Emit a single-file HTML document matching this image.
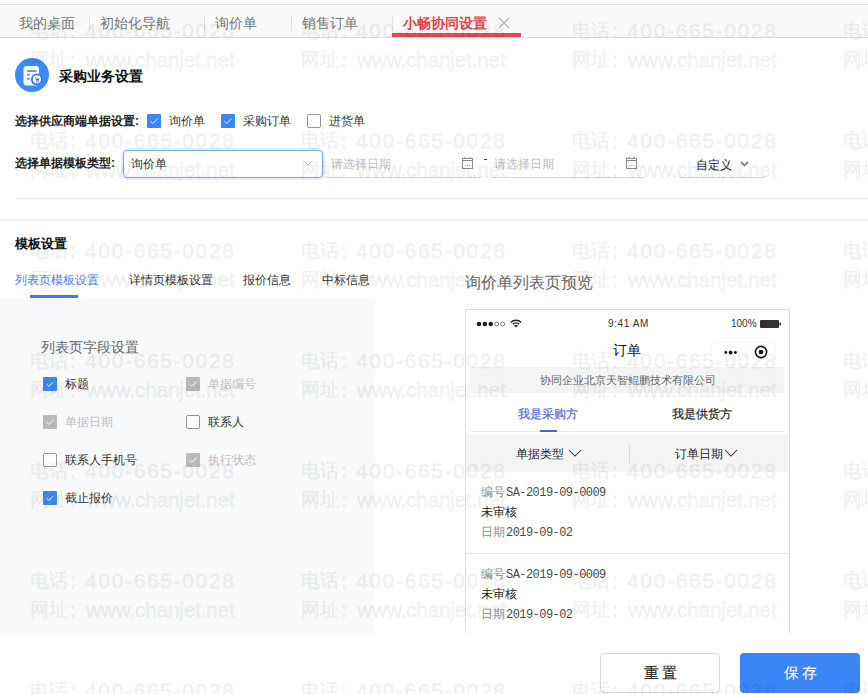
<!DOCTYPE html>
<html><head><meta charset="utf-8">
<style>
*{margin:0;padding:0;box-sizing:border-box;}
html,body{width:868px;height:694px;overflow:hidden;background:#fff;font-family:"Liberation Sans",sans-serif;color:#333;}
.a{position:absolute;white-space:nowrap;}
#topline{left:0;top:4px;width:868px;height:1px;background:#dcdcdc;}
#tabbar{left:0;top:5px;width:868px;height:33px;background:#f9f9f9;border-bottom:1px solid #dedede;}
.tab{font-size:14px;line-height:14px;color:#777;top:16px;}
.sep{top:16px;width:1px;height:15px;background:#e2e2e2;}
#act{color:#e0474d;font-weight:bold;}
#redline{left:392px;top:33px;width:129px;height:4px;background:#e24a50;}
.lbl{font-size:12px;line-height:12px;font-weight:bold;color:#222;}
.cb{width:14px;height:14px;border-radius:1px;}
.cb.on{background:#3c87f6;}
.cb.off{border:1px solid #949494;background:#fff;border-radius:2px;}
.cb.dis{background:#b9b9b9;}
.cb svg{position:absolute;left:0;top:0;}
.t12{font-size:12px;line-height:12px;color:#333;}
.wm{position:absolute;width:240px;height:60px;pointer-events:none;color:rgba(0,0,0,0.042);font-size:21px;line-height:21px;-webkit-text-stroke:1.4px rgba(0,0,0,0.042);}
.wm i{position:absolute;font-style:normal;white-space:nowrap;}
.c1{left:0;top:1px;font-size:19px;line-height:19px}.k1{left:40px;top:0}.d1{left:55px;top:0;letter-spacing:1.65px}.c2{left:0;top:30px;font-size:19px;line-height:19px}.k2{left:40px;top:29px}.d2{left:56px;top:29px;letter-spacing:-0.3px}
</style></head><body>

<div class="a" id="topline"></div>
<div class="a" id="tabbar"></div>
<div class="a tab" style="left:19px">我的桌面</div>
<div class="a sep" style="left:89px"></div>
<div class="a tab" style="left:100px">初始化导航</div>
<div class="a sep" style="left:204px"></div>
<div class="a tab" style="left:215px">询价单</div>
<div class="a sep" style="left:291px"></div>
<div class="a tab" style="left:302px">销售订单</div>
<div class="a sep" style="left:392px"></div>
<div class="a tab" id="act" style="left:403px">小畅协同设置</div>
<svg class="a" style="left:498px;top:17px" width="12" height="12" viewBox="0 0 12 12"><path d="M1 1L11 11M11 1L1 11" stroke="#b0b0b0" stroke-width="1.1"/></svg>
<div class="a" id="redline"></div>

<!-- header -->
<svg class="a" style="left:15px;top:58px" width="34" height="34" viewBox="0 0 34 34">
<circle cx="17" cy="17" r="17" fill="#3b8af6"/>
<rect x="8.5" y="8" width="15.5" height="19.5" rx="3" fill="#fff"/>
<rect x="12" y="12.3" width="9.5" height="1.6" fill="#3b8af6"/>
<rect x="12" y="16" width="2.6" height="1.6" fill="#3b8af6"/>
<rect x="12" y="20" width="2.6" height="1.6" fill="#3b8af6"/>
<circle cx="21.9" cy="21.4" r="6" fill="#3b8af6"/>
<circle cx="21.9" cy="21.4" r="5.3" fill="#2f6fd6"/>
<circle cx="21.9" cy="21.4" r="4.1" fill="#fff"/>
<path d="M19.8 19.5h0.9l0.4 1h3.3l-0.6 2.3h-2.4z" fill="#3578e0"/><circle cx="21.5" cy="23.9" r="0.65" fill="#3578e0"/><circle cx="23.3" cy="23.9" r="0.65" fill="#3578e0"/>
</svg>
<div class="a" style="left:59px;top:69px;font-size:14px;line-height:14px;font-weight:bold;color:#111">采购业务设置</div>

<!-- row 1 -->
<div class="a lbl" style="left:15px;top:115px">选择供应商端单据设置:</div>
<div class="a cb on" style="left:147px;top:114px"><svg width="14" height="14" viewBox="0 0 14 14"><path d="M3.5 7.2l2.3 2.2 4.7-4.7" stroke="#fff" stroke-width="0.95" fill="none"/></svg></div>
<div class="a t12" style="left:169px;top:115px">询价单</div>
<div class="a cb on" style="left:221px;top:114px"><svg width="14" height="14" viewBox="0 0 14 14"><path d="M3.5 7.2l2.3 2.2 4.7-4.7" stroke="#fff" stroke-width="0.95" fill="none"/></svg></div>
<div class="a t12" style="left:243px;top:115px">采购订单</div>
<div class="a cb off" style="left:307px;top:114px"></div>
<div class="a t12" style="left:329px;top:115px">进货单</div>

<!-- row 2 -->
<div class="a lbl" style="left:15px;top:157px">选择单据模板类型:</div>
<div class="a" style="left:123px;top:150px;width:200px;height:28px;border:1px solid #7fa6e6;border-radius:4px;box-shadow:0 0 0 2px rgba(120,170,240,.2)"></div>
<div class="a t12" style="left:131px;top:158px">询价单</div>
<svg class="a" style="left:304px;top:161px" width="8" height="5" viewBox="0 0 8 5"><path d="M0.5 0.5L4 4 7.5 0.5" stroke="#c4c4c4" stroke-width="1" fill="none"/></svg>

<div class="a" style="left:324px;top:150px;width:158px;height:28px;border-bottom:1px solid #d6d6d6;border-radius:0 0 4px 4px"></div>
<div class="a t12" style="left:331px;top:158px;color:#bbb">请选择日期</div>
<svg class="a" style="left:462px;top:156px" width="11" height="13" viewBox="0 0 11 13"><rect x="0.5" y="2.5" width="10" height="10" fill="none" stroke="#8c8c8c" stroke-width="1"/><path d="M0.5 4.5h10" stroke="#8c8c8c"/><path d="M3 1v2M8 1v2" stroke="#8c8c8c"/><path d="M3 9.5h1M5 9.5h1M7 9.5h1" stroke="#aaa"/></svg>
<div class="a" style="left:484px;top:159px;width:3px;height:1px;background:#333"></div>
<div class="a" style="left:489px;top:150px;width:157px;height:28px;border-bottom:1px solid #d6d6d6;border-radius:0 0 4px 4px"></div>
<div class="a t12" style="left:494px;top:158px;color:#bbb">请选择日期</div>
<svg class="a" style="left:626px;top:156px" width="11" height="13" viewBox="0 0 11 13"><rect x="0.5" y="2.5" width="10" height="10" fill="none" stroke="#8c8c8c" stroke-width="1"/><path d="M0.5 4.5h10" stroke="#8c8c8c"/><path d="M3 1v2M8 1v2" stroke="#8c8c8c"/><path d="M3 9.5h1M5 9.5h1M7 9.5h1" stroke="#aaa"/></svg>
<div class="a" style="left:678px;top:150px;width:88px;height:28px;border-bottom:1px solid #d6d6d6;border-radius:0 0 4px 4px"></div>
<div class="a t12" style="left:696px;top:159px;color:#222">自定义</div>
<svg class="a" style="left:740px;top:161px" width="9" height="6" viewBox="0 0 9 6"><path d="M1 1L4.5 4.5 8 1" stroke="#888" stroke-width="1.8" fill="none"/></svg>

<div class="a" style="left:16px;top:198px;width:852px;height:1px;background:#ebebeb"></div>
<div class="a" style="left:0;top:219px;width:868px;height:2px;background:#f3f3f3"></div>

<!-- template settings -->
<div class="a" style="left:15px;top:237px;font-size:13px;line-height:13px;font-weight:bold;color:#111">模板设置</div>
<div class="a t12" style="left:15px;top:274px;color:#4f86e6">列表页模板设置</div>
<div class="a t12" style="left:129px;top:274px">详情页模板设置</div>
<div class="a t12" style="left:243px;top:274px">报价信息</div>
<div class="a t12" style="left:322px;top:274px">中标信息</div>
<div class="a" style="left:30px;top:295px;width:48px;height:3px;background:#3b7ce2"></div>

<div class="a" style="left:0;top:299px;width:375px;height:334px;background:#f7f9fb"></div>
<div class="a" style="left:41px;top:340px;font-size:14px;line-height:14px;color:#666">列表页字段设置</div>

<div class="a cb on" style="left:43px;top:377px"><svg width="14" height="14" viewBox="0 0 14 14"><path d="M3.5 7.2l2.3 2.2 4.7-4.7" stroke="#fff" stroke-width="0.95" fill="none"/></svg></div>
<div class="a t12" style="left:65px;top:378px">标题</div>
<div class="a cb dis" style="left:186px;top:377px"><svg width="14" height="14" viewBox="0 0 14 14"><path d="M3.5 7.2l2.3 2.2 4.7-4.7" stroke="#fff" stroke-width="0.95" fill="none"/></svg></div>
<div class="a t12" style="left:208px;top:378px;color:#c0c0c0">单据编号</div>
<div class="a cb dis" style="left:43px;top:415px"><svg width="14" height="14" viewBox="0 0 14 14"><path d="M3.5 7.2l2.3 2.2 4.7-4.7" stroke="#fff" stroke-width="0.95" fill="none"/></svg></div>
<div class="a t12" style="left:65px;top:416px;color:#c0c0c0">单据日期</div>
<div class="a cb off" style="left:186px;top:415px"></div>
<div class="a t12" style="left:208px;top:416px">联系人</div>
<div class="a cb off" style="left:43px;top:453px"></div>
<div class="a t12" style="left:65px;top:454px">联系人手机号</div>
<div class="a cb dis" style="left:186px;top:453px"><svg width="14" height="14" viewBox="0 0 14 14"><path d="M3.5 7.2l2.3 2.2 4.7-4.7" stroke="#fff" stroke-width="0.95" fill="none"/></svg></div>
<div class="a t12" style="left:208px;top:454px;color:#c0c0c0">执行状态</div>
<div class="a cb on" style="left:43px;top:491px"><svg width="14" height="14" viewBox="0 0 14 14"><path d="M3.5 7.2l2.3 2.2 4.7-4.7" stroke="#fff" stroke-width="0.95" fill="none"/></svg></div>
<div class="a t12" style="left:65px;top:492px">截止报价</div>

<!-- preview -->
<div class="a" style="left:465px;top:275px;font-size:16px;line-height:16px;color:#666">询价单列表页预览</div>
<div class="a" style="left:465px;top:309px;width:325px;height:340px;border:1px solid #dcdcdc;background:#fff;overflow:hidden">
  <!-- status bar -->
  <svg class="a" style="left:10px;top:10px" width="30" height="8" viewBox="0 0 30 8">
   <circle cx="3" cy="4" r="2.3" fill="#222"/><circle cx="8.9" cy="4" r="2.3" fill="#222"/><circle cx="14.8" cy="4" r="2.3" fill="#222"/>
   <circle cx="20.7" cy="4" r="2" fill="none" stroke="#444" stroke-width="0.7"/><circle cx="26.6" cy="4" r="2" fill="none" stroke="#444" stroke-width="0.7"/>
  </svg>
  <svg class="a" style="left:44px;top:9px" width="12" height="9" viewBox="0 0 12 9">
   <path d="M0.8 3.4a7.3 7.3 0 0 1 10.4 0" stroke="#222" stroke-width="1.4" fill="none"/>
   <path d="M2.7 5.3a4.6 4.6 0 0 1 6.6 0" stroke="#222" stroke-width="1.4" fill="none"/>
   <path d="M4.2 6.8a2.5 2.5 0 0 1 3.6 0L6 8.6z" fill="#222"/>
  </svg>
  <div class="a" style="left:142px;top:9px;font-size:10px;line-height:10px;color:#333;letter-spacing:0.6px">9:41 AM</div>
  <div class="a" style="left:265px;top:9px;font-size:10px;line-height:10px;color:#333">100%</div>
  <svg class="a" style="left:294px;top:10px" width="21" height="8" viewBox="0 0 21 8"><rect x="0" y="0" width="19" height="8" rx="1" fill="#333"/><rect x="19.5" y="2.5" width="1.5" height="3" fill="#333"/></svg>
  <!-- nav -->
  <div class="a" style="left:147px;top:33px;font-size:14px;line-height:14px;color:#111">订单</div>
  <div class="a" style="left:245px;top:31px;width:65px;height:24px;border:1px solid #f7f7f7;border-radius:5px"></div><div class="a" style="left:280px;top:37px;width:1px;height:12px;background:#f7f7f7"></div><svg class="a" style="left:258px;top:40px" width="14" height="5" viewBox="0 0 14 5"><circle cx="1.8" cy="2.5" r="1.4" fill="#111"/><circle cx="6.6" cy="2.5" r="1.9" fill="#111"/><circle cx="11.4" cy="2.5" r="1.4" fill="#111"/></svg>
  <svg class="a" style="left:288px;top:35px" width="14" height="14" viewBox="0 0 14 14"><circle cx="7" cy="7" r="5.6" stroke="#111" stroke-width="1.6" fill="none"/><circle cx="7" cy="7" r="2.3" fill="#111"/></svg>
  <!-- company -->
  <div class="a" style="left:5px;top:57px;width:313px;height:26px;background:#f4f4f5"></div>
  <div class="a" style="left:0;top:65px;width:323px;text-align:center;font-size:11px;line-height:11px;color:#666">协同企业北京天智鲲鹏技术有限公司</div>
  <!-- tabs -->
  <div class="a" style="left:52px;top:98px;font-size:12px;line-height:12px;color:#5068da;-webkit-text-stroke:0.2px #5068da">我是采购方</div>
  <div class="a" style="left:206px;top:98px;font-size:12px;line-height:12px;color:#222;-webkit-text-stroke:0.2px #222">我是供货方</div>
  <div class="a" style="left:5px;top:121px;width:313px;height:1px;background:#e6e6e6"></div>
  <div class="a" style="left:74px;top:120px;width:17px;height:2px;background:#4a62d8"></div>
  <!-- filter -->
  <div class="a" style="left:0;top:124px;width:323px;height:38px;background:#f4f4f4"></div>
  <div class="a" style="left:50px;top:138px;font-size:12px;line-height:12px;color:#222">单据类型</div>
  <svg class="a" style="left:102px;top:139px" width="14" height="8" viewBox="0 0 14 8"><path d="M1 1l6 6 6-6" stroke="#333" stroke-width="1.05" fill="none"/></svg>
  <div class="a" style="left:163px;top:135px;width:1px;height:18px;background:#dcdcdc"></div>
  <div class="a" style="left:209px;top:138px;font-size:12px;line-height:12px;color:#222">订单日期</div>
  <svg class="a" style="left:258px;top:139px" width="14" height="8" viewBox="0 0 14 8"><path d="M1 1l6 6 6-6" stroke="#333" stroke-width="1.05" fill="none"/></svg>
  <!-- items -->
  <div class="a t12" style="left:15px;top:176px;color:#8c8c8c">编号<span style="font-family:'Liberation Mono',monospace;font-size:12px;letter-spacing:-0.55px;color:#4a4a4a;margin-left:1px">SA-2019-09-0009</span></div>
  <div class="a t12" style="left:15px;top:196px;color:#222">未审核</div>
  <div class="a t12" style="left:15px;top:216px;color:#8c8c8c">日期<span style="font-family:'Liberation Mono',monospace;font-size:12px;letter-spacing:-0.55px;color:#4a4a4a;margin-left:1px">2019-09-02</span></div>
  <div class="a" style="left:0;top:243px;width:323px;height:1px;background:#e6e6e6"></div>
  <div class="a t12" style="left:15px;top:258px;color:#8c8c8c">编号<span style="font-family:'Liberation Mono',monospace;font-size:12px;letter-spacing:-0.55px;color:#4a4a4a;margin-left:1px">SA-2019-09-0009</span></div>
  <div class="a t12" style="left:15px;top:278px;color:#222">未审核</div>
  <div class="a t12" style="left:15px;top:298px;color:#8c8c8c">日期<span style="font-family:'Liberation Mono',monospace;font-size:12px;letter-spacing:-0.55px;color:#4a4a4a;margin-left:1px">2019-09-02</span></div>
</div>
<div class="a" style="left:0;top:633px;width:868px;height:61px;background:#fff"></div>

<!-- buttons -->
<div class="a" style="left:600px;top:653px;width:120px;height:40px;border:1px solid #d9d9d9;border-radius:4px;background:#fff"></div>
<div class="a" style="left:644px;top:665px;font-size:15px;line-height:15px;color:#222;letter-spacing:3px;-webkit-text-stroke:0.1px #222">重置</div>
<div class="a" style="left:740px;top:653px;width:120px;height:40px;border-radius:4px;background:#3a86f6"></div>
<div class="a" style="left:784px;top:665px;font-size:15px;line-height:15px;color:#fff;letter-spacing:3px;-webkit-text-stroke:0.1px #fff">保存</div>

<!-- watermarks -->
<div id="wml">
<div class="wm" style="left:30px;top:20px"><i class="c1">电话</i><i class="k1">:</i><i class="d1">400-665-0028</i><i class="c2">网址</i><i class="k2">:</i><i class="d2">www.chanjet.net</i></div>
<div class="wm" style="left:301px;top:20px"><i class="c1">电话</i><i class="k1">:</i><i class="d1">400-665-0028</i><i class="c2">网址</i><i class="k2">:</i><i class="d2">www.chanjet.net</i></div>
<div class="wm" style="left:572px;top:20px"><i class="c1">电话</i><i class="k1">:</i><i class="d1">400-665-0028</i><i class="c2">网址</i><i class="k2">:</i><i class="d2">www.chanjet.net</i></div>
<div class="wm" style="left:843px;top:20px"><i class="c1">电话</i><i class="k1">:</i><i class="d1">400-665-0028</i><i class="c2">网址</i><i class="k2">:</i><i class="d2">www.chanjet.net</i></div>
<div class="wm" style="left:30px;top:130px"><i class="c1">电话</i><i class="k1">:</i><i class="d1">400-665-0028</i><i class="c2">网址</i><i class="k2">:</i><i class="d2">www.chanjet.net</i></div>
<div class="wm" style="left:301px;top:130px"><i class="c1">电话</i><i class="k1">:</i><i class="d1">400-665-0028</i><i class="c2">网址</i><i class="k2">:</i><i class="d2">www.chanjet.net</i></div>
<div class="wm" style="left:572px;top:130px"><i class="c1">电话</i><i class="k1">:</i><i class="d1">400-665-0028</i><i class="c2">网址</i><i class="k2">:</i><i class="d2">www.chanjet.net</i></div>
<div class="wm" style="left:843px;top:130px"><i class="c1">电话</i><i class="k1">:</i><i class="d1">400-665-0028</i><i class="c2">网址</i><i class="k2">:</i><i class="d2">www.chanjet.net</i></div>
<div class="wm" style="left:30px;top:240px"><i class="c1">电话</i><i class="k1">:</i><i class="d1">400-665-0028</i><i class="c2">网址</i><i class="k2">:</i><i class="d2">www.chanjet.net</i></div>
<div class="wm" style="left:301px;top:240px"><i class="c1">电话</i><i class="k1">:</i><i class="d1">400-665-0028</i><i class="c2">网址</i><i class="k2">:</i><i class="d2">www.chanjet.net</i></div>
<div class="wm" style="left:572px;top:240px"><i class="c1">电话</i><i class="k1">:</i><i class="d1">400-665-0028</i><i class="c2">网址</i><i class="k2">:</i><i class="d2">www.chanjet.net</i></div>
<div class="wm" style="left:843px;top:240px"><i class="c1">电话</i><i class="k1">:</i><i class="d1">400-665-0028</i><i class="c2">网址</i><i class="k2">:</i><i class="d2">www.chanjet.net</i></div>
<div class="wm" style="left:30px;top:350px"><i class="c1">电话</i><i class="k1">:</i><i class="d1">400-665-0028</i><i class="c2">网址</i><i class="k2">:</i><i class="d2">www.chanjet.net</i></div>
<div class="wm" style="left:301px;top:350px"><i class="c1">电话</i><i class="k1">:</i><i class="d1">400-665-0028</i><i class="c2">网址</i><i class="k2">:</i><i class="d2">www.chanjet.net</i></div>
<div class="wm" style="left:572px;top:350px"><i class="c1">电话</i><i class="k1">:</i><i class="d1">400-665-0028</i><i class="c2">网址</i><i class="k2">:</i><i class="d2">www.chanjet.net</i></div>
<div class="wm" style="left:843px;top:350px"><i class="c1">电话</i><i class="k1">:</i><i class="d1">400-665-0028</i><i class="c2">网址</i><i class="k2">:</i><i class="d2">www.chanjet.net</i></div>
<div class="wm" style="left:30px;top:460px"><i class="c1">电话</i><i class="k1">:</i><i class="d1">400-665-0028</i><i class="c2">网址</i><i class="k2">:</i><i class="d2">www.chanjet.net</i></div>
<div class="wm" style="left:301px;top:460px"><i class="c1">电话</i><i class="k1">:</i><i class="d1">400-665-0028</i><i class="c2">网址</i><i class="k2">:</i><i class="d2">www.chanjet.net</i></div>
<div class="wm" style="left:572px;top:460px"><i class="c1">电话</i><i class="k1">:</i><i class="d1">400-665-0028</i><i class="c2">网址</i><i class="k2">:</i><i class="d2">www.chanjet.net</i></div>
<div class="wm" style="left:843px;top:460px"><i class="c1">电话</i><i class="k1">:</i><i class="d1">400-665-0028</i><i class="c2">网址</i><i class="k2">:</i><i class="d2">www.chanjet.net</i></div>
<div class="wm" style="left:30px;top:570px"><i class="c1">电话</i><i class="k1">:</i><i class="d1">400-665-0028</i><i class="c2">网址</i><i class="k2">:</i><i class="d2">www.chanjet.net</i></div>
<div class="wm" style="left:301px;top:570px"><i class="c1">电话</i><i class="k1">:</i><i class="d1">400-665-0028</i><i class="c2">网址</i><i class="k2">:</i><i class="d2">www.chanjet.net</i></div>
<div class="wm" style="left:572px;top:570px"><i class="c1">电话</i><i class="k1">:</i><i class="d1">400-665-0028</i><i class="c2">网址</i><i class="k2">:</i><i class="d2">www.chanjet.net</i></div>
<div class="wm" style="left:843px;top:570px"><i class="c1">电话</i><i class="k1">:</i><i class="d1">400-665-0028</i><i class="c2">网址</i><i class="k2">:</i><i class="d2">www.chanjet.net</i></div>
<div class="wm" style="left:30px;top:680px"><i class="c1">电话</i><i class="k1">:</i><i class="d1">400-665-0028</i><i class="c2">网址</i><i class="k2">:</i><i class="d2">www.chanjet.net</i></div>
<div class="wm" style="left:301px;top:680px"><i class="c1">电话</i><i class="k1">:</i><i class="d1">400-665-0028</i><i class="c2">网址</i><i class="k2">:</i><i class="d2">www.chanjet.net</i></div>
<div class="wm" style="left:572px;top:680px"><i class="c1">电话</i><i class="k1">:</i><i class="d1">400-665-0028</i><i class="c2">网址</i><i class="k2">:</i><i class="d2">www.chanjet.net</i></div>
<div class="wm" style="left:843px;top:680px"><i class="c1">电话</i><i class="k1">:</i><i class="d1">400-665-0028</i><i class="c2">网址</i><i class="k2">:</i><i class="d2">www.chanjet.net</i></div>
</div>
</body></html>
